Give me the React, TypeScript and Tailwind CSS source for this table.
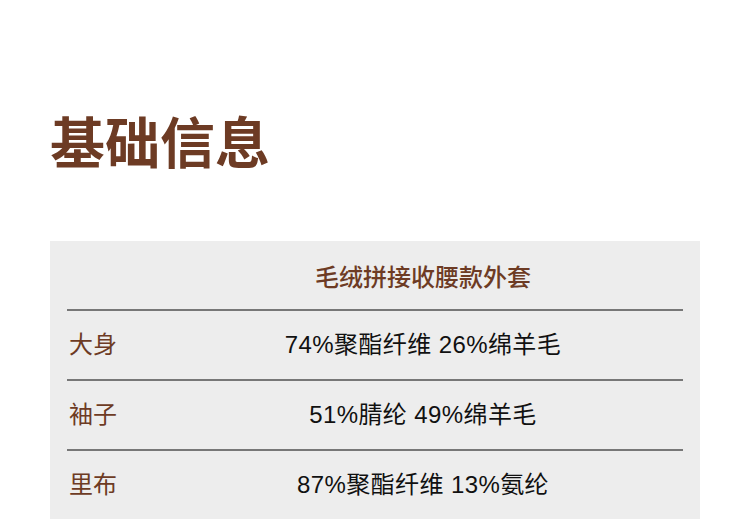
const rows = [
  { label: "大身", value: "74%聚酯纤维 26%绵羊毛" },
  { label: "袖子", value: "51%腈纶 49%绵羊毛" },
  { label: "里布", value: "87%聚酯纤维 13%氨纶" },
];

export default function App() {
  return (
    <div
      className="min-h-[520px] bg-white px-[50px] pt-[112px]"
      style={{ fontFamily: '"Liberation Sans", "Noto Sans CJK SC", sans-serif' }}
    >
      <h1 className="text-[55px] font-bold leading-[64px] text-[#6d3b24]">基础信息</h1>

      <div className="mt-[65px] w-[650px] bg-[#ededed] px-[17px]">
        <div className="grid h-[68px] grid-cols-[96px_1fr] items-center pt-[6px] text-[24px] font-medium text-[#6d3b24]">
          <div />
          <div className="text-center">毛绒拼接收腰款外套</div>
        </div>
        {rows.map((r) => (
          <div
            key={r.label}
            className="grid h-[70px] grid-cols-[96px_1fr] items-center border-t-2 border-[#777777] text-[24px]"
          >
            <div className="pl-[2px] text-[#6d3b24]">{r.label}</div>
            <div className="text-center tracking-[0.4px] text-[#111111]">{r.value}</div>
          </div>
        ))}
      </div>
    </div>
  );
}
